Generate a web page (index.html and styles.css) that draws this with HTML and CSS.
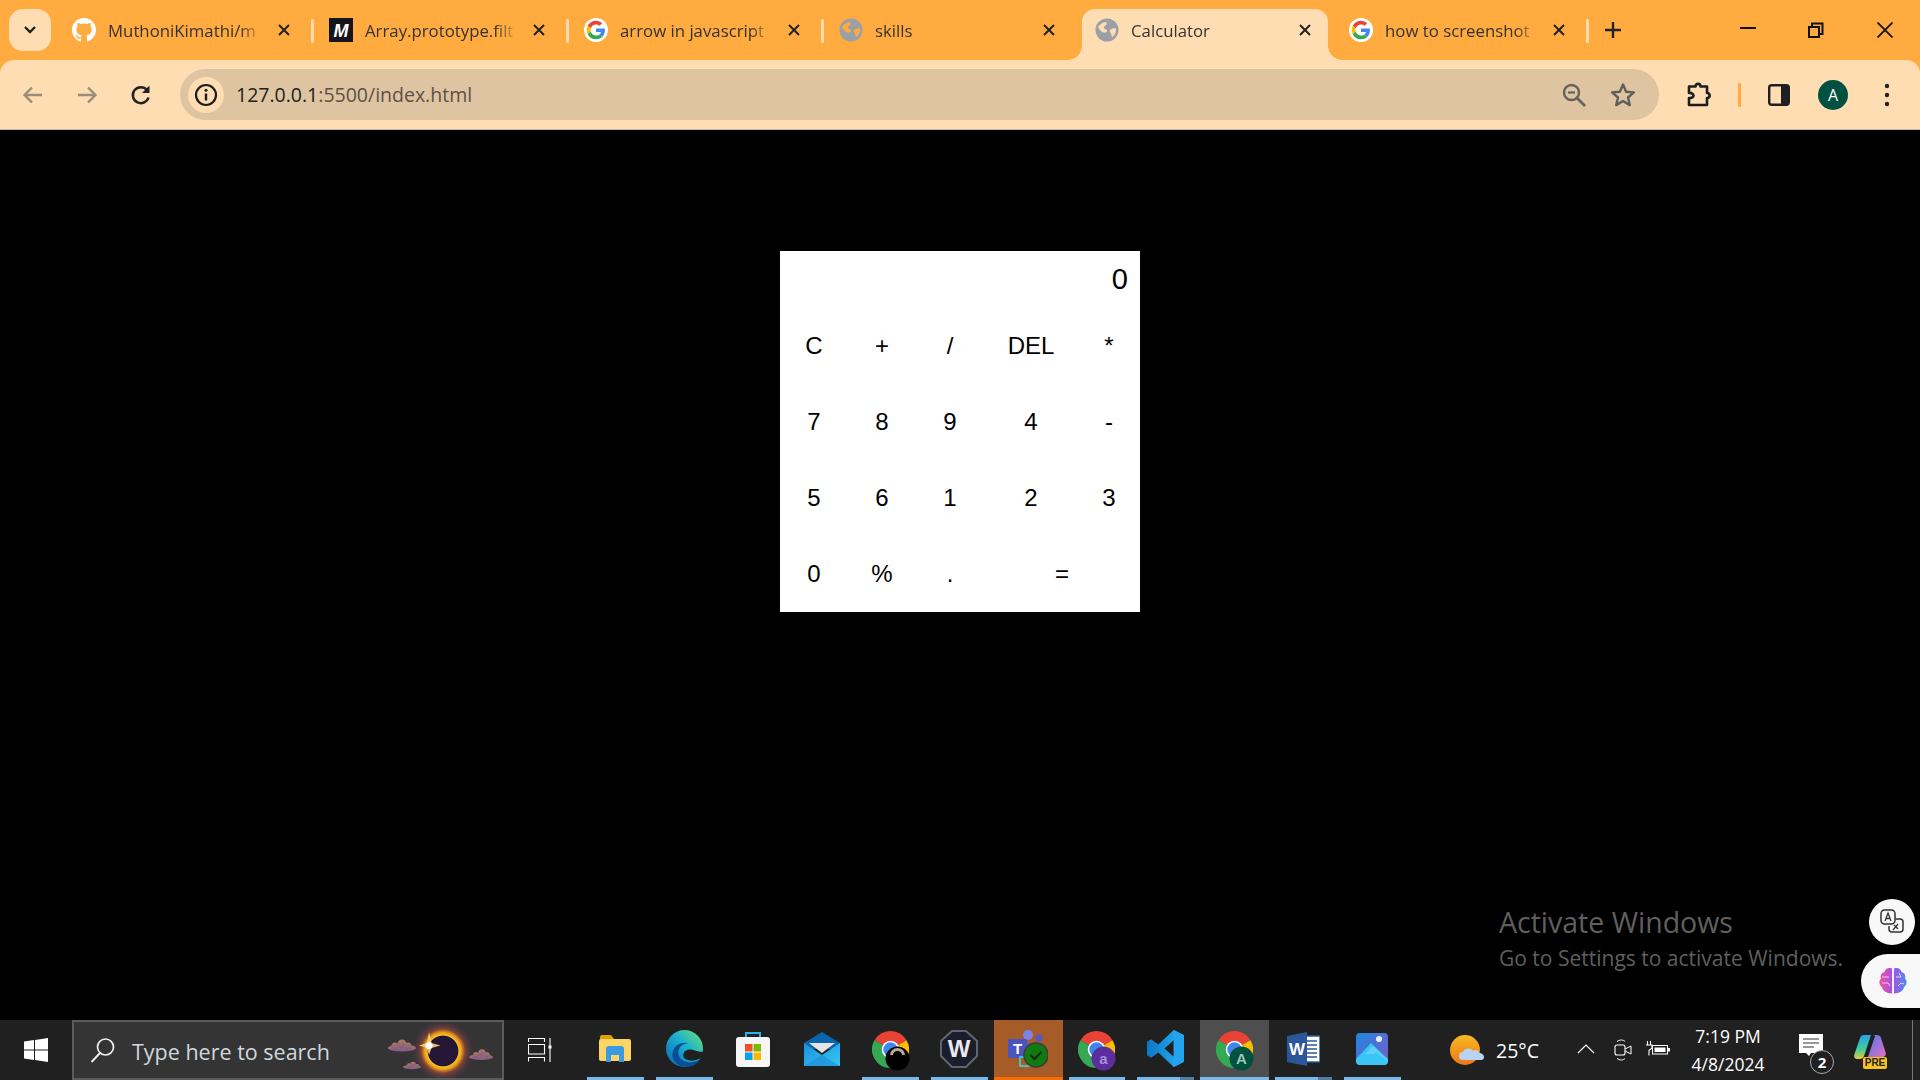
FILE: index.html
```html
<!DOCTYPE html>
<html lang="en">
<head>
<meta charset="utf-8">
<title>Calculator</title>
<link rel="stylesheet" href="styles.css">
</head>
<body>
<svg class="defs" width="0" height="0" aria-hidden="true">
  <defs>
    <linearGradient id="edgeG" x1="0" y1="1" x2="1" y2="0"><stop offset="0" stop-color="#0a62b5"/><stop offset=".55" stop-color="#1bb0d0"/><stop offset="1" stop-color="#72e46a"/></linearGradient>
    <linearGradient id="mailG" x1="0" y1="0" x2="1" y2="1"><stop offset="0" stop-color="#1b8fdc"/><stop offset="1" stop-color="#38c8f5"/></linearGradient>
    <linearGradient id="photoG" x1="0" y1="0" x2="1" y2="1"><stop offset="0" stop-color="#1f86e0"/><stop offset="1" stop-color="#7b5cc4"/></linearGradient>
    <linearGradient id="vsG" x1="0" y1="0" x2="1" y2="0"><stop offset="0" stop-color="#0a78c4"/><stop offset="1" stop-color="#2ab0f5"/></linearGradient>
    <linearGradient id="sunG" x1="0" y1="0" x2="0" y2="1"><stop offset="0" stop-color="#f7b921"/><stop offset="1" stop-color="#f0761a"/></linearGradient>
    <linearGradient id="brainG" x1="0" y1="0" x2="1" y2="0"><stop offset="0" stop-color="#f0569c"/><stop offset=".45" stop-color="#b04fe0"/><stop offset="1" stop-color="#4a8cf5"/></linearGradient>
    <linearGradient id="copA" x1="0" y1="0" x2="0" y2="1"><stop offset="0" stop-color="#2b9fe8"/><stop offset=".6" stop-color="#3fd09a"/><stop offset="1" stop-color="#e8c83c"/></linearGradient>
    <linearGradient id="copB" x1="0" y1="0" x2="1" y2="1"><stop offset="0" stop-color="#4b7cf0"/><stop offset="1" stop-color="#e86cc0"/></linearGradient>
    <linearGradient id="cloudG" x1="0" y1="0" x2="0" y2="1"><stop offset="0" stop-color="#b07a5c"/><stop offset="1" stop-color="#7c5a8c"/></linearGradient>
    <radialGradient id="halo"><stop offset=".45" stop-color="#241634"/><stop offset=".48" stop-color="#1d1330"/><stop offset=".51" stop-color="#f6c028"/><stop offset=".6" stop-color="#ea9a1e"/><stop offset=".72" stop-color="#8a4630" stop-opacity=".8"/><stop offset="1" stop-color="#4a2c60" stop-opacity="0"/></radialGradient>
    <symbol id="google" viewBox="-7 -7 62 62">
      <circle cx="24" cy="24" r="31" fill="#fff"/>
      <path fill="#EA4335" d="M24 9.500c3.540 0 6.710 1.220 9.210 3.600l6.850-6.850C35.900 2.380 30.470 0 24 0 14.620 0 6.510 5.380 2.560 13.220l7.980 6.190C12.430 13.720 17.740 9.500 24 9.500z"/>
      <path fill="#4285F4" d="M46.980 24.550c0-1.570-.15-3.090-.38-4.550H24v9.020h12.940c-.58 2.960-2.260 5.480-4.780 7.180l7.730 6c4.510-4.180 7.090-10.360 7.090-17.650z"/>
      <path fill="#FBBC05" d="M10.530 28.590c-.48-1.450-.76-2.990-.76-4.590s.27-3.140.76-4.590l-7.980-6.190C.92 16.460 0 20.120 0 24c0 3.880.92 7.540 2.560 10.780l7.970-6.190z"/>
      <path fill="#34A853" d="M24 48c6.480 0 11.930-2.130 15.890-5.810l-7.730-6c-2.150 1.450-4.920 2.300-8.160 2.300-6.260 0-11.570-4.220-13.470-9.910l-7.980 6.190C6.510 42.620 14.620 48 24 48z"/>
    </symbol>
    <symbol id="globe" viewBox="0 0 24 24">
      <circle cx="12" cy="12" r="11.500" fill="#9aa0a6"/>
      <path fill="currentColor" d="M3 9c2-3 5-5 8-5 1 1 1 3-1 4-2 .6-1 3 1 3.600 2 .8 1 3-1 3-3 .4-5-2-7-5.600z"/>
      <path fill="currentColor" d="M15 12c2-1.600 4-2 6-1.500 .4 3-.8 6-3.500 8.500-1.500-.5-1-2.500-1.500-3.500-.8-1-2-2.400-1-3.500z"/>
    </symbol>
    <symbol id="chrome" viewBox="0 0 36 36">
      <path fill="#ea4335" d="M18 18 2.410 9A18 18 0 0 1 33.590 9z"/>
      <path fill="#fbbc05" d="M18 18 33.590 9A18 18 0 0 1 18 36z"/>
      <path fill="#34a853" d="M18 18 18 36A18 18 0 0 1 2.410 9z"/>
      <circle cx="18" cy="18" r="8.500" fill="#fff"/>
      <circle cx="18" cy="18" r="7" fill="#3f86ee"/>
    </symbol>
    <symbol id="close-x" viewBox="0 0 12 12"><path d="M1 1l10 10M11 1 1 11" stroke="#222" stroke-width="2" fill="none"/></symbol>
  </defs>
</svg>

<header class="strip">
  <button class="tab-menu"><svg width="14" height="10" viewBox="0 0 14 10"><path d="M2 2l5 5 5-5" fill="none" stroke="#222" stroke-width="2.400"/></svg></button>
  <div class="tab sep first">
    <svg class="fav" viewBox="0 0 16 16"><path fill="#fff" d="M8 0C3.580 0 0 3.580 0 8c0 3.540 2.290 6.530 5.470 7.590.4.070.55-.17.55-.38 0-.19-.01-.82-.01-1.490-2.010.37-2.530-.49-2.690-.94-.09-.23-.48-.94-.82-1.130-.28-.15-.68-.52-.01-.53.63-.01 1.080.58 1.230.82.72 1.210 1.870.87 2.330.66.070-.52.28-.87.51-1.070-1.780-.2-3.640-.89-3.640-3.950 0-.87.31-1.590.82-2.150-.08-.2-.36-1.020.08-2.120 0 0 .67-.21 2.200.82.64-.18 1.320-.27 2-.27.68 0 1.360.09 2 .27 1.530-1.040 2.200-.82 2.200-.82.44 1.100.16 1.920.08 2.120.51.56.82 1.270.82 2.150 0 3.070-1.870 3.750-3.650 3.950.29.25.54.73.54 1.480 0 1.070-.01 1.930-.01 2.200 0 .21.15.46.55.38A8.013 8.013 0 0016 8c0-4.420-3.580-8-8-8z"/></svg>
    <span class="title">MuthoniKimathi/m</span>
    <svg class="tab-x"><use href="#close-x"/></svg>
  </div>
  <div class="tab sep">
    <svg class="fav" viewBox="0 0 24 24"><rect width="24" height="24" fill="#15141a"/><text x="12" y="19" class="mdn-m">M</text></svg>
    <span class="title">Array.prototype.filt</span>
    <svg class="tab-x"><use href="#close-x"/></svg>
  </div>
  <div class="tab sep">
    <svg class="fav"><use href="#google"/></svg>
    <span class="title">arrow in javascript</span>
    <svg class="tab-x"><use href="#close-x"/></svg>
  </div>
  <div class="tab">
    <svg class="fav globe globe-o"><use href="#globe"/></svg>
    <span class="title">skills</span>
    <svg class="tab-x"><use href="#close-x"/></svg>
  </div>
  <div class="tab active">
    <svg class="fav globe globe-p"><use href="#globe"/></svg>
    <span class="title">Calculator</span>
    <svg class="tab-x"><use href="#close-x"/></svg>
  </div>
  <div class="tab sep">
    <svg class="fav"><use href="#google"/></svg>
    <span class="title">how to screenshot</span>
    <svg class="tab-x"><use href="#close-x"/></svg>
  </div>
  <button class="new-tab"><svg width="18" height="18" viewBox="0 0 18 18"><path d="M9 1v16M1 9h16" stroke="#222" stroke-width="2.400"/></svg></button>
  <div class="win-ctrls">
    <div class="win-btn"><svg width="16" height="16" viewBox="0 0 16 16"><path d="M0 6h16" stroke="#111" stroke-width="2"/></svg></div>
    <div class="win-btn"><svg width="16" height="16" viewBox="0 0 16 16"><path d="M1 5h10v10H1zM4 5V1.500h10.500V12H11" fill="none" stroke="#111" stroke-width="2"/></svg></div>
    <div class="win-btn"><svg width="16" height="16" viewBox="0 0 16 16"><path d="M.5.5l15 15M15.500.5l-15 15" stroke="#111" stroke-width="1.800"/></svg></div>
  </div>
</header>

<nav class="toolbar">
  <div class="nav-btn"><svg width="22" height="22" viewBox="0 0 22 22"><path d="M20 11H3M10 3.500 2.500 11l7.500 7.500" fill="none" stroke="#9a8c7a" stroke-width="2.400"/></svg></div>
  <div class="nav-btn"><svg width="22" height="22" viewBox="0 0 22 22"><path d="M2 11h17M12 3.500l7.500 7.500-7.500 7.500" fill="none" stroke="#9a8c7a" stroke-width="2.400"/></svg></div>
  <div class="nav-btn"><svg width="22" height="24" viewBox="0 0 22 24"><path d="M18.500 14.500A8 8 0 1 1 17 7" fill="none" stroke="#222" stroke-width="2.500"/><path d="M19.500 2.500v7.500H12z" fill="#222"/></svg></div>
  <div class="omnibox">
    <div class="site-info"><svg width="24" height="24" viewBox="0 0 24 24"><circle cx="12" cy="12" r="10" fill="none" stroke="#1c1c1c" stroke-width="2.200"/><path d="M12 10.500v7" stroke="#1c1c1c" stroke-width="2.400"/><circle cx="12" cy="7.300" r="1.500" fill="#1c1c1c"/></svg></div>
    <div class="url"><span class="url-host">127.0.0.1</span>:5500/index.html</div>
    <svg class="omni-icon zoom-ic" width="26" height="26" viewBox="0 0 26 26"><circle cx="10.500" cy="10.500" r="7.500" fill="none" stroke="#66635f" stroke-width="2.400"/><path d="M7 10.500h7" stroke="#66635f" stroke-width="2.200"/><path d="M16 16l8 8" stroke="#66635f" stroke-width="2.600"/></svg>
    <svg class="omni-icon star-ic" width="26" height="26" viewBox="0 0 26 26"><path d="M13 2.500l3.100 7.200 7.800.7-5.900 5.100 1.800 7.600L13 19l-6.800 4.100L8 15.500l-5.900-5.100 7.800-.7z" fill="none" stroke="#5f5f5c" stroke-width="2.400" stroke-linejoin="round"/></svg>
  </div>
  <div class="tool-cell tool-first"><svg width="28" height="28" viewBox="0 0 28 28"><path d="M4 5.500h6.500c0-3.500 5-3.500 5 0H22V12c3.500 0 3.500 5 0 5v7H4v-7c3.500 .5 4.500-1.500 4.500-2.500S7 11.500 4 12z" fill="none" stroke="#1d1d1d" stroke-width="2.600" stroke-linejoin="round"/></svg></div>
  <div class="tool-cell"><span class="tool-sep"></span></div>
  <div class="tool-cell"><svg width="22" height="22" viewBox="0 0 22 22"><rect x="1.200" y="1.200" width="19.600" height="19.600" rx="2.500" fill="none" stroke="#1d1f23" stroke-width="2.400"/><path d="M13 1h6a2 2 0 0 1 2 2v16a2 2 0 0 1-2 2h-6z" fill="#1d1f23"/></svg></div>
  <div class="tool-cell tool-avatar"><span class="avatar">A</span></div>
  <div class="tool-cell"><svg width="8" height="24" viewBox="0 0 8 24"><circle cx="4" cy="3" r="2.200" fill="#222"/><circle cx="4" cy="12" r="2.200" fill="#222"/><circle cx="4" cy="21" r="2.200" fill="#222"/></svg></div>
</nav>

<main class="page">
  <section class="calc">
    <div class="display">0</div>
    <button class="key">C</button><button class="key">+</button><button class="key">/</button><button class="key">DEL</button><button class="key">*</button>
    <button class="key">7</button><button class="key">8</button><button class="key">9</button><button class="key">4</button><button class="key">-</button>
    <button class="key">5</button><button class="key">6</button><button class="key">1</button><button class="key">2</button><button class="key">3</button>
    <button class="key">0</button><button class="key">%</button><button class="key">.</button><button class="key wide">=</button>
  </section>
  <div class="activate">
    <div class="act-1">Activate Windows</div>
    <div class="act-2">Go to Settings to activate Windows.</div>
  </div>
  <div class="float-circle"><svg width="24" height="26" viewBox="0 0 24 26"><rect x="1" y="1" width="14" height="14" rx="3.500" fill="#f7f7f7" stroke="#333" stroke-width="1.500"/><path d="M5 12l3-8 3 8M6.200 9.500h3.600" fill="none" stroke="#333" stroke-width="1.300"/><path d="M15.500 10H20a3 3 0 0 1 3 3v7a3 3 0 0 1-3 3h-8a3 3 0 0 1-3-3v-3" fill="none" stroke="#333" stroke-width="1.500"/><path d="M13 21l5-6M14 16l4 4" stroke="#333" stroke-width="1.200"/></svg></div>
  <div class="float-pill"><svg width="30" height="28" viewBox="0 0 30 28"><path d="M14 1.500C10 0 7 2 6.500 5 3 6 2 9 3 11.500.5 14 1 18 4 20c.5 3.500 4 6.500 10 6.500zM16 1.500c4-1.500 7 .5 7.500 3.500 3.500 1 4.500 4 3.500 6.500 2.500 2.500 2 6.500-1 8.500-.5 3.500-4 6.500-10 6.500z" fill="url(#brainG)"/><path d="M4 10h7M4 16h6l2 3M21 6l2 4-5 0M20 19l3-3 3 1" fill="none" stroke="#f5d8f5" stroke-width=".9"/></svg></div>
</main>

<footer class="taskbar">
  <div class="start"><svg width="24" height="24" viewBox="0 0 24 24"><path fill="#fff" d="M0 3.400l10-1.400v9.500H0zM11 1.900 24 0v11.500H11zM0 12.500h10V22L0 20.600zM11 12.500h13V24l-13-1.900z"/></svg></div>
  <div class="search">
    <svg width="26" height="26" viewBox="0 0 26 26"><circle cx="15.500" cy="10" r="8" fill="none" stroke="#eee" stroke-width="1.700"/><path d="M10 16 1.500 25" stroke="#eee" stroke-width="1.900"/></svg>
    <span class="search-text">Type here to search</span>
    <svg class="eclipse" width="112" height="56" viewBox="0 0 112 56">
      <circle cx="57" cy="29" r="31" fill="url(#halo)"/>
      <g fill="url(#cloudG)">
        <ellipse cx="16" cy="26" rx="14" ry="3.500"/><circle cx="9" cy="24" r="3.500"/><circle cx="16" cy="22" r="4.500"/><circle cx="22" cy="24" r="3.500"/>
        <ellipse cx="95" cy="35" rx="12" ry="3"/><circle cx="90" cy="33" r="3"/><circle cx="96" cy="31" r="3.800"/><circle cx="101" cy="33" r="2.800"/>
        <ellipse cx="26" cy="45" rx="9" ry="2.200"/><circle cx="23" cy="43.500" r="2.200"/><circle cx="27" cy="42.500" r="2.800"/><circle cx="31" cy="44" r="2"/>
      </g>
      <path d="M43 10l2.500 11 9 2.500-9 2.500-2.500 7-2-7-8-2.500 8-2.500z" fill="#f6d27a" opacity=".9"/>
      <circle cx="43" cy="23.500" r="3.500" fill="#fff"/>
    </svg>
  </div>
  <div class="taskview"><svg width="24" height="24" viewBox="0 0 24 24"><path d="M.5 4V.5h16V4M.5 6.500h16v9.500H.5zM.5 23.500V19.500h16v4M22 0v24" fill="none" stroke="#fff" stroke-width="1.100"/><rect x="20.500" y="7.500" width="3" height="3" fill="#fff"/></svg></div>

  <div class="cell open"><svg width="32" height="27" viewBox="0 0 32 27"><path d="M1 2a2 2 0 0 1 2-2h9l3 4H1z" fill="#e0a000"/><rect x="0" y="4" width="32" height="22" rx="2" fill="#fcd565"/><path d="M7 27V14a3 3 0 0 1 3-3h12a3 3 0 0 1 3 3v13h-5v-7h-8v7z" fill="#3c9be0"/></svg></div>
  <div class="cell open"><svg width="37" height="37" viewBox="0 0 36 36"><circle cx="18" cy="18" r="18" fill="url(#edgeG)"/><path d="M20 36C10 36 4 28 7 20C9 14 16 11 22 13C16 13 12 17 12 22C12 29 19 33 27 31C31 30 34 28 35 26C32 32 26 36 20 36z" fill="#0a4f96"/><path d="M17 23C18 19 24 18 28 20C32 21 35 22 36 21L35.500 26C32 29 26 31 21 29C18 28 16 26 17 23z" fill="#202020"/></svg></div>
  <div class="cell"><svg width="36" height="36" viewBox="0 0 36 36"><path d="M11 8V2h14v6" fill="none" stroke="#2bb0e8" stroke-width="2"/><rect x="1" y="6" width="34" height="30" rx="3" fill="#f6f6f6"/><rect x="10" y="13" width="7.500" height="7.500" fill="#f25022"/><rect x="18.500" y="13" width="7.500" height="7.500" fill="#7fba00"/><rect x="10" y="21.500" width="7.500" height="7.500" fill="#00a4ef"/><rect x="18.500" y="21.500" width="7.500" height="7.500" fill="#ffb900"/></svg></div>
  <div class="cell"><svg width="36" height="34" viewBox="0 0 36 34"><path d="M0 11 18 0l18 11v6H0z" fill="#0c64ad"/><path d="M5 11h26L18 21z" fill="#e4e4e4"/><path d="M0 11l18 12 18-12v23H0z" fill="url(#mailG)"/><path d="M0 34l18-11 18 11z" fill="#1a8ad6" opacity=".6"/></svg></div>
  <div class="cell open"><svg class="ch-ic" viewBox="0 0 37 37"><use href="#chrome" width="37" height="37"/><circle cx="25.500" cy="27.500" r="12" fill="#000"/><path d="M18 24a7.500 7 0 0 1 15 0l-3 0a4.500 4 0 0 0-9 0z" fill="#b8a890"/></svg></div>
  <div class="cell open"><svg width="38" height="38" viewBox="0 0 38 38"><path d="M12 1h14l11 10v15L26 37H12L1 26V11z" fill="#1b1e2a" stroke="#5d6472" stroke-width="2"/><text x="19" y="27" class="wing-w">W</text></svg></div>
  <div class="cell teams">
    <svg width="40" height="38" viewBox="0 0 40 38"><circle cx="20" cy="5" r="5" fill="#7b83eb"/><circle cx="31" cy="8" r="3.500" fill="#5059c9"/><rect x="16" y="13" width="19" height="14" rx="2" fill="#5059c9"/><rect x="0" y="9" width="19" height="19" rx="2" fill="#4b53bc"/><text x="9.500" y="24" class="teams-t">T</text><rect x="12" y="27" width="9" height="9" fill="none" stroke="#37dbe6" stroke-width="1.500"/><circle cx="28" cy="25" r="12" fill="#107c10" stroke="#3b3b3b" stroke-width="1.500"/><path d="M22.500 25l4 4 7-7" fill="none" stroke="#102810" stroke-width="2"/></svg>
  </div>
  <div class="cell open"><svg class="ch-ic" viewBox="0 0 37 37"><use href="#chrome" width="37" height="37"/><circle cx="25.500" cy="27.500" r="12" fill="#5c2d9e"/><text x="25.500" y="33" class="ch-badge ch-badge-p">a</text></svg></div>
  <div class="cell open stack"><svg width="37" height="37" viewBox="0 0 36 36"><path d="M26 0 36 5v26l-10 5-15-14-7 5-4-2.500V11.500L4 9l7 5zM26 10l-9 8 9 8z" fill="url(#vsG)" fill-rule="evenodd"/><path d="M26 0 36 5v26l-10 5z" fill="#24a4ee"/></svg></div>
  <div class="cell open focus"><svg class="ch-ic" viewBox="0 0 37 37"><use href="#chrome" width="37" height="37"/><circle cx="25.500" cy="27.500" r="12" fill="#00513f"/><text x="25.500" y="33" class="ch-badge ch-badge-g">A</text></svg></div>
  <div class="cell open stack"><svg width="33" height="34" viewBox="0 0 33 34"><rect x="13" y="4" width="20" height="26" fill="#fff" stroke="#2b579a" stroke-width="1.500"/><path d="M17 9h13M17 13h13M17 17h13M17 21h13M17 25h13" stroke="#2b579a" stroke-width="1.600"/><path d="M0 4 20 0v34L0 30z" fill="#2b579a"/><text x="10" y="23" class="word-w">W</text></svg></div>
  <div class="cell open"><svg width="32" height="32" viewBox="0 0 32 32"><rect width="32" height="32" rx="4" fill="url(#photoG)"/><circle cx="23" cy="6" r="3" fill="#eef"/><path d="M0 26 15 10l17 16v2a4 4 0 0 1-4 4H4a4 4 0 0 1-4-4z" fill="#39c5f5"/><path d="M8 32 20 19l12 10v-1L17 13 9 21l9 0z" fill="#8be0fa" opacity=".5"/></svg></div>

  <div class="tray">
    <div class="weather">
      <svg width="34" height="30" viewBox="0 0 34 30"><circle cx="15" cy="15" r="15" fill="url(#sunG)"/><path d="M13 25a4 4 0 0 1 0-8c1-4 8-5 10-1 2-2 6-1 6 2 3 0 5 2 5 4s-1 3-3 3z" fill="#b9d3f2"/></svg>
      <span class="temp">25°C</span>
    </div>
    <div class="t-ic t-chev"><svg width="18" height="10" viewBox="0 0 18 10"><path d="M1 9l8-8 8 8" fill="none" stroke="#fff" stroke-width="1.200"/></svg></div>
    <div class="t-ic t-cam"><svg width="18" height="22" viewBox="0 0 18 22"><rect x="1" y="6" width="10" height="10" rx="2" fill="none" stroke="#fff" stroke-width="1.100"/><path d="M11 10l6-3v8l-6-3M3 2.500c3-2 6-2 8 0M3 19.500c3 2 6 2 8 0" fill="none" stroke="#fff" stroke-width="1"/></svg></div>
    <div class="t-ic t-bat"><svg width="24" height="15" viewBox="0 0 24 15"><rect x="6.500" y="4.500" width="15" height="8.500" fill="#202020" stroke="#fff"/><rect x="8.500" y="6.500" width="11" height="4.500" fill="#fff"/><rect x="22" y="7" width="2" height="3.500" fill="#fff"/><path d="M1.500 0v4M4.500 0v4M0 4h6v3l-3 2.500v5" fill="none" stroke="#fff" stroke-width="1.100"/></svg></div>
    <div class="clock"><div>7:19 PM</div><div>4/8/2024</div></div>
    <div class="t-ic t-note"><svg width="24" height="26" viewBox="0 0 24 26"><path d="M0 0h24v19H12l-2 3-3-3H0z" fill="#fff"/><path d="M4 5h16M4 9h16M4 13h11" stroke="#333" stroke-width="1.200"/></svg><span class="badge">2</span></div>
    <div class="t-ic t-cop"><svg width="32" height="26" viewBox="0 0 32 26"><path d="M10 1h7l-7 21c-.6 2-2 3-4 3H3C.5 25-.5 23 .5 20L6 4c.6-2 2-3 4-3z" fill="url(#copA)"/><path d="M18 1h5c2 0 3.500 1 4 3l4.500 14c.8 3-.5 5-3 5H14L21 2c-.5-.6-2-1-3-1z" fill="url(#copB)"/></svg><span class="pre">PRE</span></div>
    <div class="show-desk"></div>
  </div>
</footer>
</body>
</html>
```
FILE: styles.css
```css
* { box-sizing: border-box; }
html, body { margin: 0; height: 100%; }
body {
  width: 1920px;
  height: 1080px;
  overflow: hidden;
  display: flex;
  flex-direction: column;
  background: #ffab40;
  font-family: "Open Sans", "Noto Sans", sans-serif;
}
button { border: 0; background: none; padding: 0; font: inherit; color: inherit; }
.defs { position: absolute; }

/* tab strip */
.strip {
  height: 60px;
  flex: none;
  background: #ffab40;
  display: flex;
  padding-top: 9px;
}
.tab-menu {
  width: 42px;
  height: 42px;
  margin: 0 6px 0 9px;
  border-radius: 14px;
  background: #ffddb3;
  display: flex;
  align-items: center;
  justify-content: center;
  flex: none;
}
.tab {
  position: relative;
  width: 255px;
  height: 51px;
  flex: none;
  display: flex;
  padding: 9px 0 0 17px;
  color: #333;
}
.tab.first { padding-left: 15px; }
.tab.first .title { width: 154px; }
.tab.sep::after {
  content: "";
  position: absolute;
  right: -1.5px;
  top: 10px;
  width: 3px;
  height: 24px;
  border-radius: 2px;
  background: #ffdcb0;
}
.tab.active {
  width: 246px;
  margin: 0 4px 0 5px;
  padding-left: 13px;
  background: #ffddb3;
  border-radius: 13px 13px 0 0;
}
.tab.active::before,
.tab.active::after {
  content: "";
  position: absolute;
  bottom: 0;
  width: 14px;
  height: 14px;
}
.tab.active::before { left: -14px; background: radial-gradient(circle at 0 0, transparent 13.5px, #ffddb3 14px); }
.tab.active::after { right: -14px; background: radial-gradient(circle at 100% 0, transparent 13.5px, #ffddb3 14px); }
.fav { width: 24px; height: 24px; flex: none; }
.globe-o { color: #ffab40; }
.globe-p { color: #ffddb3; }
.title {
  width: 152px;
  margin: 1px 0 0 12px;
  font-size: 16.8px;
  line-height: 24px;
  white-space: nowrap;
  -webkit-mask-image: linear-gradient(90deg, #000 86%, transparent 100%);
  mask-image: linear-gradient(90deg, #000 86%, transparent 100%);
}
.tab-x { width: 12px; height: 12px; margin: 6px 0 0 16px; flex: none; }
.new-tab {
  width: 38px;
  height: 42px;
  margin-left: 7px;
  display: flex;
  align-items: center;
  justify-content: center;
}
.win-ctrls { margin: -9px 0 0 auto; display: flex; padding-right: 1px; }
.win-btn {
  width: 68.5px;
  height: 60px;
  display: flex;
  align-items: center;
  justify-content: center;
}

/* toolbar */
.toolbar {
  height: 70px;
  flex: none;
  background: #ffddb3;
  border-radius: 14px 14px 0 0;
  border-bottom: 1px solid #c9b79f;
  display: flex;
  align-items: flex-start;
  padding: 9px 0 0 6px;
}
.nav-btn {
  width: 54px;
  height: 51px;
  flex: none;
  display: flex;
  align-items: center;
  justify-content: center;
}
.omnibox {
  width: 1479px;
  height: 51px;
  margin-left: 12px;
  flex: none;
  display: flex;
  align-items: center;
  border-radius: 26px;
  background: #dec4a1;
  padding-left: 8px;
}
.site-info {
  width: 36px;
  height: 36px;
  border-radius: 50%;
  background: #ffddb3;
  display: flex;
  align-items: center;
  justify-content: center;
  flex: none;
}
.url {
  margin-left: 12px;
  font-size: 19.5px;
  color: #5b5248;
  flex: 1;
  white-space: nowrap;
}
.url-host { color: #222; }
.omni-icon { flex: none; }
.zoom-ic { margin-right: 23px; }
.star-ic { margin-right: 23px; }
.tool-cell {
  width: 40px;
  height: 51px;
  flex: none;
  display: flex;
  align-items: center;
  justify-content: center;
}
.tool-first { margin-left: 20px; }
.tool-avatar { width: 68px; }
.tool-sep { width: 3px; height: 24px; background: #ffab40; border-radius: 1px; }
.avatar {
  width: 30px;
  height: 30px;
  border-radius: 50%;
  background: #00513f;
  color: #fff;
  font-size: 16px;
  line-height: 30px;
  text-align: center;
}

/* page */
.page {
  flex: 1;
  min-height: 0;
  position: relative;
  background: #000;
  display: flex;
  justify-content: center;
  align-items: flex-start;
  padding-top: 121px;
}
.calc {
  width: 360px;
  height: 361px;
  background: #fff;
  display: grid;
  grid-template-columns: 68px 68px 68px 94px 62px;
  grid-template-rows: 57px repeat(4, 76px);
  font-family: "Liberation Sans", Arial, sans-serif;
  color: #000;
}
.display {
  grid-column: 1 / -1;
  text-align: right;
  font-size: 29px;
  line-height: 56px;
  padding-right: 12px;
}
.key { font-size: 24px; font-family: inherit; text-align: center; }
.wide { grid-column: span 2; }
.activate {
  position: absolute;
  left: 1499px;
  top: 774px;
  color: #5f5f5f;
  white-space: nowrap;
}
.act-1 { font-size: 28.5px; line-height: 36px; }
.act-2 { font-size: 21px; line-height: 36px; }
.float-circle {
  position: absolute;
  left: 1869px;
  top: 769px;
  width: 46px;
  height: 46px;
  border-radius: 50%;
  background: #f8f8f8;
  display: flex;
  align-items: center;
  justify-content: center;
}
.float-pill {
  position: absolute;
  left: 1861px;
  top: 824px;
  width: 59px;
  height: 54px;
  border-radius: 27px 0 0 27px;
  background: #f8f8f8;
  display: flex;
  align-items: center;
  padding-left: 17px;
}

/* taskbar */
.taskbar {
  height: 60px;
  flex: none;
  background: #202020;
  display: flex;
  color: #fff;
}
.start {
  width: 72px;
  flex: none;
  display: flex;
  align-items: center;
  justify-content: center;
}
.search {
  width: 432px;
  flex: none;
  background: #343434;
  border: 2px solid #5c5c5c;
  display: flex;
  align-items: center;
  padding-left: 16px;
}
.search-text { margin: 2px 0 0 16px; font-size: 21.5px; color: #cfd8df; flex: 1; white-space: nowrap; }
.eclipse { margin-right: 4px; flex: none; }
.taskview {
  width: 77px;
  flex: none;
  display: flex;
  align-items: center;
  justify-content: center;
  padding-right: 5px;
}
.cell {
  width: 68.8px;
  flex: none;
  position: relative;
  display: flex;
  align-items: center;
  justify-content: center;
  padding-bottom: 3px;
}
.cell.open::after {
  content: "";
  position: absolute;
  left: 6px;
  right: 6px;
  bottom: 0;
  height: 3px;
  background: #76b9ed;
}
.cell.stack::after { background: linear-gradient(90deg, #76b9ed 75%, #4f7fa3 75%); }
.cell.focus { background: #4e4e4e; }
.cell.focus::after { left: 0; right: 0; }
.teams { background: #a65c28; border-bottom: 3px solid #f76b00; padding-bottom: 0; }
.ch-ic { width: 37px; height: 37px; margin-top: 2px; overflow: visible; }
.mdn-m { font: italic 700 18px "Liberation Sans", sans-serif; fill: #fff; text-anchor: middle; }
.wing-w { font: 900 24px "Liberation Sans", sans-serif; fill: #e8e8ee; text-anchor: middle; }
.teams-t { font: 700 15px "Liberation Sans", sans-serif; fill: #fff; text-anchor: middle; }
.ch-badge { font: 700 15px "Liberation Sans", sans-serif; text-anchor: middle; }
.ch-badge-p { fill: #a58fd8; }
.ch-badge-g { fill: #9fc4b8; }
.word-w { font: 700 17px "Liberation Sans", sans-serif; fill: #fff; text-anchor: middle; }

.tray { margin-left: auto; display: flex; height: 60px; flex: none; }
.weather {
  width: 128px;
  display: flex;
  align-items: center;
  padding-left: 10px;
}
.temp { margin-left: 12px; font-size: 19.5px; }
.t-ic { display: flex; align-items: center; justify-content: center; position: relative; }
.t-chev { width: 36px; padding-bottom: 2px; }
.t-cam { width: 38px; }
.t-bat { width: 32px; padding-bottom: 4px; }
.clock {
  width: 108px;
  display: flex;
  flex-direction: column;
  align-items: center;
  justify-content: center;
  gap: 4px;
  font-size: 17.5px;
  line-height: 24px;
}
.t-note { width: 66px; padding: 0 8px 6px 0; }
.badge {
  position: absolute;
  left: 28px;
  top: 30px;
  width: 24px;
  height: 24px;
  border: 1px solid #aaa;
  border-radius: 50%;
  background: #202020;
  font-size: 15px;
  font-weight: 700;
  line-height: 22px;
  text-align: center;
}
.t-cop { width: 44px; padding-bottom: 6px; }
.pre {
  position: absolute;
  left: 15px;
  top: 37px;
  width: 24px;
  height: 12px;
  border-radius: 2px;
  background: #f7c31c;
  color: #222;
  font: 700 10px/12px "Liberation Sans", sans-serif;
  text-align: center;
}
.show-desk { width: 28px; position: relative; }
.show-desk::after {
  content: "";
  position: absolute;
  left: 20px;
  top: 0;
  bottom: 0;
  width: 1px;
  background: #777;
}
```
